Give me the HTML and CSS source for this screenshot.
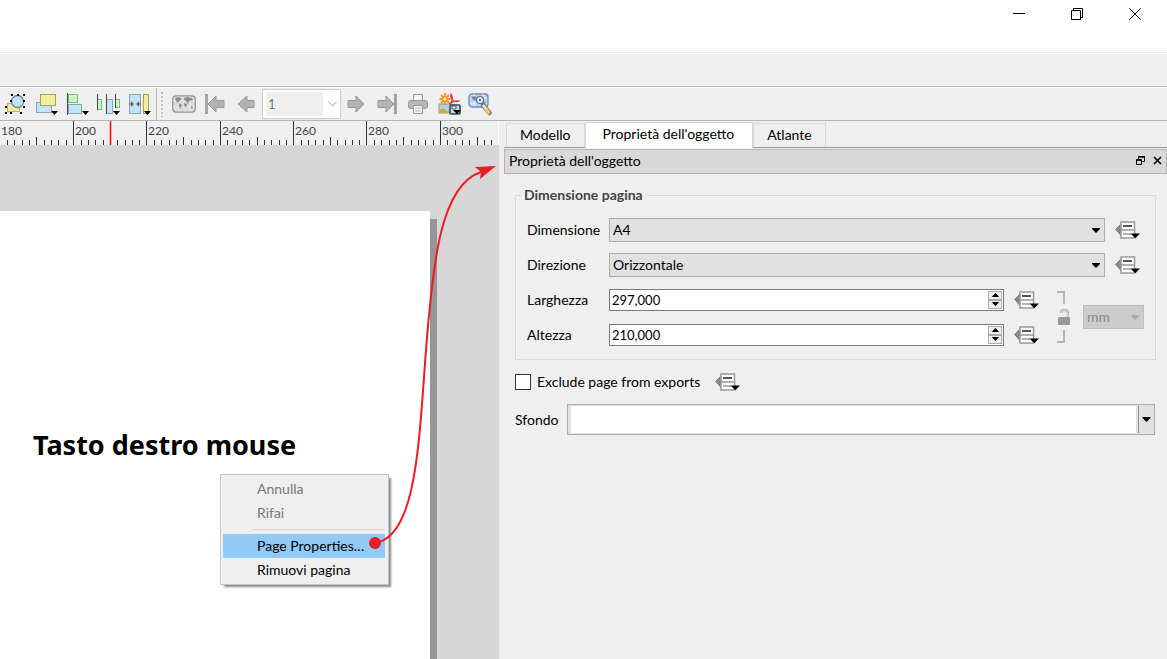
FILE: index.html
```html
<!DOCTYPE html>
<html lang="it">
<head>
<meta charset="utf-8">
<title>Layout</title>
<link rel="stylesheet" href="styles.css">
</head>
<body>
<svg class="defs" aria-hidden="true">
  <symbol id="override" viewBox="0 0 25 18">
    <path d="M6 3L.8 8.500l5.200 6z" fill="#8a8b8c" stroke="#747474"/>
    <rect x="6" y="1" width="13.500" height="16" fill="#fff" stroke="#999" stroke-width="1.500"/>
    <path d="M6 9h13" stroke="#999" stroke-width="1.500"/>
    <path d="M8 5h9" stroke="#555" stroke-width="2"/>
    <path d="M8 13h8" stroke="#888" stroke-width="1.300"/>
    <path d="M15.500 12.500h9.500l-4.700 4.800z" fill="#000"/>
  </symbol>
  <symbol id="down" viewBox="0 0 8 5"><path d="M0 0h8v1L4 5 0 1z" fill="currentColor"/></symbol>
</svg>

<header class="titlebar">
  <button class="win" aria-label="Riduci a icona"><svg viewBox="0 0 12 12"><path d="M0 5.500h12" stroke="#000"/></svg></button>
  <button class="win" aria-label="Ripristina"><svg viewBox="0 0 12 12"><path d="M.5 2.500h9v9h-9zM2.500 2V.5h9v9H10" fill="none" stroke="#000"/></svg></button>
  <button class="win" aria-label="Chiudi"><svg viewBox="0 0 12 12"><path d="M.3.3l11.400 11.400M11.700.3L.3 11.700" stroke="#000"/></svg></button>
</header>
<div class="menubar"></div>

<div class="toolbar" role="toolbar">
  <div class="tools tools-first">
    <button class="tool" aria-label="Raggruppa"><svg viewBox="0 0 24 24">
      <rect x="4.500" y="11.500" width="12" height="8" fill="#f2e99b" stroke="#c6b458"/><circle cx="14.500" cy="9.500" r="6" fill="#c2e0f5" stroke="#6485a8" stroke-width="1.300"/>
      <path d="M2 20h2v2H2zM7 20h2v2H7zM17 20h2v2h-2zM2 14h2v2H2zM20 2h2v2h-2zM20 8h2v2h-2zM20 14h2v2h-2zM8 2h2v2H8zM14 2h2v2h-2zM7 8h2v2H7z"/></svg></button>
    <button class="tool" aria-label="Alza"><svg viewBox="0 0 24 24">
      <rect x="2.500" y="10.500" width="15" height="10" fill="#c5e3f7" stroke="#84a7c2"/><rect x="6.500" y="2.500" width="15" height="11" fill="#f2ef9f" stroke="#a99e58"/><path d="M17 19h7l-3.500 4z"/></svg></button>
    <button class="tool" aria-label="Allinea"><svg viewBox="0 0 24 24">
      <path d="M2.500 1v22" stroke="#444"/><rect x="3.500" y="2.500" width="9" height="8" fill="#c5f5c5" stroke="#7fba7f"/><rect x="3.500" y="12.500" width="13" height="9" fill="#c5e3f7" stroke="#84a7c2"/><path d="M17 19h7l-3.500 4z"/></svg></button>
    <button class="tool" aria-label="Distribuisci"><svg viewBox="0 0 24 24">
      <rect x="1.500" y="7.500" width="4" height="10" fill="#c5f5c5" stroke="#7fba7f"/><rect x="10.500" y="7.500" width="6" height="14" fill="#c5e3f7" stroke="#84a7c2"/><rect x="19.500" y="7.500" width="4" height="8" fill="#c5f5c5" stroke="#7fba7f"/><path d="M1.500 2v16M10.500 2v20M19.500 2v14" stroke="#444"/><path d="M17 19h7l-3.500 4z"/></svg></button>
    <button class="tool" aria-label="Ridimensiona"><svg viewBox="0 0 24 24">
      <rect x="2.500" y="2.500" width="11" height="19" fill="#c5e3f7" stroke="#84a7c2"/><rect x="16.500" y="2.500" width="5" height="19" fill="#f2ef9f" stroke="#a99e58"/><path d="M2 12h3M11 12h3" stroke="#555"/><path d="M4 9l3 3-3 3zM12 9l-3 3 3 3z" fill="#666"/><path d="M17 19h7l-3.500 4z"/></svg></button>
  </div>
  <span class="grip"></span>
  <div class="tools">
    <button class="tool" disabled aria-label="Anteprima atlante"><svg viewBox="0 0 24 24">
      <rect x=".8" y="3.800" width="22.400" height="16.400" rx="3.500" fill="#dcdcdc" stroke="#919191" stroke-width="1.200"/><path d="M1 9h22M1 15h22M7 4v16M13 4v16M18 4v16" stroke="#f2f2f2" stroke-width=".6"/><path d="M3 6l4-1 3 2-3 2-1 2-2-2zM7 11l3 2-2 4-1-3zM12 6l3-1 5 1 1 2-4 1-1 3-2-3-2-1zM12 11l3 1-1 4-2-3zM19 14l2 1-1 2-1-1z" fill="#8e8e8e"/></svg></button>
    <button class="tool" disabled aria-label="Prima geometria"><svg viewBox="0 0 24 24"><path d="M3.500 2v20" stroke="#a5a5a5" stroke-width="3"/><path d="M5 12l8-8v4.500h8v7h-8V20z" fill="#b2b2b2" stroke="#999"/></svg></button>
    <button class="tool" disabled aria-label="Precedente"><svg viewBox="0 0 24 24"><path d="M4 12l9-8v4.500h7v7h-7V20z" fill="#b2b2b2" stroke="#999"/></svg></button>
  </div>
  <div class="pagebox"><input type="text" value="1" disabled aria-label="Pagina atlante"><svg viewBox="0 0 10 6"><path d="M.5.500L5 5 9.500.500" fill="none" stroke="#999"/></svg></div>
  <div class="tools">
    <button class="tool" disabled aria-label="Successiva"><svg viewBox="0 0 24 24"><path d="M20 12l-8-8v4.500H4v7h8V20z" fill="#b2b2b2" stroke="#999"/></svg></button>
    <button class="tool" disabled aria-label="Ultima geometria"><svg viewBox="0 0 24 24"><path d="M20.500 2v20" stroke="#a5a5a5" stroke-width="3"/><path d="M19 12l-8-8v4.500H3v7h8V20z" fill="#b2b2b2" stroke="#999"/></svg></button>
    <button class="tool" disabled aria-label="Stampa atlante"><svg viewBox="0 0 24 24"><path d="M7.500 9V2.500h9V9" fill="#f3f3f3" stroke="#999"/><rect x="2.500" y="8.500" width="19" height="8" rx="2" fill="#b5b5b5" stroke="#999"/><path d="M7.500 13.500h9v8h-9z" fill="#fff" stroke="#999"/><path d="M9 16h6M9 19h6" stroke="#aaa"/></svg></button>
    <button class="tool" aria-label="Esporta atlante"><svg viewBox="0 0 24 24">
      <rect x="2" y="12" width="13" height="9" fill="#a8cff0" stroke="#b5984c"/><path d="M2.500 18q4-3 6 0t6-1v3.500h-12z" fill="#d1a845"/>
      <path d="M8 1v12M2.500 7h11M4 3l8 8M12 3l-8 8" stroke="#f7931e" stroke-width="2"/><circle cx="8" cy="7" r="1.500" fill="#fff"/>
      <path d="M12 12c4-2 4-7 2-10-1 5 3 9 8 7-4-1-7 1-10 3" fill="none" stroke="#e33" stroke-width="1.200"/>
      <rect x="13" y="13" width="10" height="9" rx="1" fill="#c7dcec" stroke="#26445c" stroke-width="1.500"/><path d="M15 14h4v3h-4z" fill="#fff" stroke="#555"/><path d="M16 18h8l-4 4z"/></svg></button>
    <button class="tool" aria-label="Impostazioni atlante"><svg viewBox="0 0 24 24">
      <rect x="1" y="2" width="19" height="13" rx="3" fill="#bcd5ee" stroke="#6d8dac" stroke-width="1.300"/><path d="M2 6h17M2 11h17M6 2v12M15 2v12" stroke="#e6f1fc"/><path d="M3 5l4-1 2 2-3 3zM15 9l3 1-1 3z" fill="#6d8dac"/><circle cx="12" cy="8" r="3.500" fill="#e8f2fb" stroke="#536b82" stroke-width="1.200"/><circle cx="12" cy="8" r="1.200" fill="#536b82"/><path d="M15 13l6.500 8" stroke="#777" stroke-width="4.500" stroke-linecap="round"/><path d="M15 13l6 7.500" stroke="#e8e8e8" stroke-width="2.500"/><path d="M18 17l3.500 4.500" stroke="#f1d154" stroke-width="3"/></svg></button>
  </div>
</div>

<main class="workspace">
  <section class="canvas">
    <svg class="ruler" viewBox="0 0 499 24" width="499" height="24">
      <path class="tick" d="M7.500 19v6m7-6v6m8-6v6m7-6v6m7-9v9m8-6v6m7-6v6m7-6v6m8-6v6M73.500 0v25m8-6v6m7-6v6m7-6v6m8-6v6m7-9v9m7-6v6m8-6v6m7-6v6m7-6v6M146.500 0v25m8-6v6m7-6v6m8-6v6m7-6v6m7-9v9m8-6v6m7-6v6m7-6v6m8-6v6M220.500 0v25m7-6v6m8-6v6m7-6v6m7-6v6m8-9v9m7-6v6m7-6v6m8-6v6m7-6v6M293.500 0v25m8-6v6m7-6v6m7-6v6m8-6v6m7-9v9m7-6v6m8-6v6m7-6v6m7-6v6M366.500 0v25m8-6v6m7-6v6m8-6v6m7-6v6m7-9v9m8-6v6m7-6v6m7-6v6m8-6v6M440.500 0v25m7-6v6m8-6v6m7-6v6m7-6v6m8-9v9m7-6v6m7-6v6"/>
      <path d="M110.500 0v25" stroke="#f00" stroke-width="1.500"/>
      <path d="M498.500 0v25" stroke="#fff"/>
      <text x="1" y="14">180</text><text x="75" y="14">200</text><text x="148" y="14">220</text><text x="222" y="14">240</text><text x="295" y="14">260</text><text x="368" y="14">280</text><text x="442" y="14">300</text>
    </svg>
    <div class="view">
      <div class="sheet"><h1 class="note">Tasto destro mouse</h1></div>
      <div class="menu" role="menu">
        <button role="menuitem" disabled>Annulla</button>
        <button role="menuitem" disabled>Rifai</button>
        <hr>
        <button role="menuitem" class="current">Page Properties…</button>
        <button role="menuitem">Rimuovi pagina</button>
      </div>
    </div>
  </section>

  <aside class="panel">
    <nav class="tabs" role="tablist">
      <button role="tab">Modello</button><button role="tab" class="active" aria-selected="true">Proprietà dell'oggetto</button><button role="tab">Atlante</button>
    </nav>
    <div class="dock">
      <span>Proprietà dell'oggetto</span>
      <button aria-label="Sgancia"><svg viewBox="0 0 9 9"><path d="M2.500 3V1h6v4.500H6.500M.5 4h5v4.500h-5z" fill="none" stroke="#000"/><path d="M2 .800h7M0 4h6" stroke="#000" stroke-width="1.600"/></svg></button>
      <button aria-label="Chiudi pannello"><svg viewBox="0 0 9 9"><path d="M1 1l7 7M8 1L1 8" stroke="#000" stroke-width="1.700"/></svg></button>
    </div>
    <form class="form">
      <fieldset>
        <legend>Dimensione pagina</legend>
        <div class="row">
          <label for="size">Dimensione</label>
          <div class="combo"><select id="size"><option>A4</option></select><svg><use href="#down"/></svg></div>
          <button type="button" class="dd" aria-label="Sovrascrittura dimensione"><svg><use href="#override"/></svg></button>
        </div>
        <div class="row">
          <label for="dir">Direzione</label>
          <div class="combo"><select id="dir"><option>Orizzontale</option></select><svg><use href="#down"/></svg></div>
          <button type="button" class="dd" aria-label="Sovrascrittura direzione"><svg><use href="#override"/></svg></button>
        </div>
        <div class="pair">
          <div class="stack">
            <div class="row">
              <label for="w">Larghezza</label>
              <div class="spin"><input id="w" type="text" value="297,000"><div class="steps"><button type="button" aria-label="Aumenta"><svg class="up"><use href="#down"/></svg></button><button type="button" aria-label="Diminuisci"><svg><use href="#down"/></svg></button></div></div>
              <button type="button" class="dd" aria-label="Sovrascrittura larghezza"><svg><use href="#override"/></svg></button>
            </div>
            <div class="row">
              <label for="h">Altezza</label>
              <div class="spin"><input id="h" type="text" value="210,000"><div class="steps"><button type="button" aria-label="Aumenta"><svg class="up"><use href="#down"/></svg></button><button type="button" aria-label="Diminuisci"><svg><use href="#down"/></svg></button></div></div>
              <button type="button" class="dd" aria-label="Sovrascrittura altezza"><svg><use href="#override"/></svg></button>
            </div>
          </div>
          <button type="button" class="lock" disabled aria-label="Blocca proporzioni"><svg viewBox="0 0 14 52"><path d="M0 1h7v12M0 51h7V39" fill="none" stroke="#b5b5b5" stroke-width="2"/><path d="M4 22q0-3 3.500-3t3.500 4v5" fill="none" stroke="#b0b0b0" stroke-width="2.500"/><path d="M4 22q0-3 3.500-3t3.500 4v5" fill="none" stroke="#e2e2e2"/><rect x="1" y="26" width="12" height="8" rx="1.500" fill="#999"/></svg></button>
          <div class="combo unit"><select disabled aria-label="Unità"><option>mm</option></select><svg><use href="#down"/></svg></div>
        </div>
      </fieldset>
      <div class="exclude">
        <input type="checkbox" id="ex"><label for="ex">Exclude page from exports</label>
        <button type="button" class="dd" aria-label="Sovrascrittura esclusione"><svg><use href="#override"/></svg></button>
      </div>
      <div class="background">
        <label for="bg">Sfondo</label>
        <button type="button" id="bg" class="swatch"><span class="fill"></span><span class="drop"><svg><use href="#down"/></svg></span></button>
      </div>
    </form>
  </aside>

  <svg class="arrow" viewBox="0 0 140 400" width="140" height="400" aria-hidden="true">
    <path d="M15 392C57 386 59 289 66 199S81 34 121 21" fill="none" stroke="#ed1c24" stroke-width="2"/>
    <circle cx="15" cy="392" r="6" fill="#ed1c24"/>
    <path d="M136 15l-21 1 6 5-1 7z" fill="#ed1c24"/>
  </svg>
</main>
</body>
</html>
```
FILE: styles.css
```css
* { box-sizing: border-box; }
body {
  margin: 0;
  min-height: 100vh;
  display: flex;
  flex-direction: column;
  background: #efefef;
  color: #000;
  font: 14px/18px Lato, "Noto Sans", sans-serif;
}
button, input, select { font: inherit; color: inherit; margin: 0; }
button { padding: 0; border: 0; background: none; }
svg { display: block; }
.defs { position: absolute; width: 0; height: 0; }

.titlebar {
  display: flex;
  justify-content: flex-end;
  height: 53px;
  padding-right: 3px;
  background: #fff;
  border-bottom: 1px solid #efefef;
}
.win { width: 58px; height: 28px; display: grid; place-items: center; }
.win svg { width: 12px; height: 12px; }
.menubar { height: 33px; border-top: 1px solid #fff; }

.toolbar {
  display: flex;
  align-items: center;
  height: 35px;
  border-top: 1px solid #b5b5b5;
  border-bottom: 1px solid #b5b5b5;
  box-shadow: inset 0 1px #fff;
}
.tools { display: flex; gap: 7px; }
.tools-first { padding-left: 3px; }
.tool { width: 24px; height: 24px; }
.tool svg { width: 24px; height: 24px; }
.grip {
  align-self: stretch;
  width: 9px;
  margin: 1px 7px 0 5px;
  border-left: 1px solid #b5b5b5;
  background: repeating-linear-gradient(#c5c5c5 0 2px, #efefef 2px 4px) 4px 4px / 2px 25px no-repeat;
}
.pagebox {
  display: flex;
  align-items: center;
  width: 79px;
  height: 30px;
  margin: 0 3px 0 4px;
  padding: 3px;
  background: #fff;
  border: 1px solid #ccc;
}
.pagebox input { width: 57px; height: 24px; padding: 0 2px; border: 0; background: #efefef; color: #777; font-size: 13px; }
.pagebox svg { width: 10px; height: 6px; margin-left: 5px; }

.workspace { position: relative; flex: 1; display: flex; }
.canvas { flex: 0 0 499px; display: flex; flex-direction: column; background: #d7d7d7; overflow: hidden; }
.ruler { background: #efefef; font-size: 12px; }
.ruler text { fill: #444; }
.tick { stroke: #333; fill: none; }
.view { position: relative; flex: 1; display: flex; padding: 66px 62px 0 0; }
.sheet { flex: 1; margin-right: 7px; background: #fff; box-shadow: 7px 8px #969696; }
.note { margin: 216px 0 0 33px; font: bold 27px/36px "Noto Sans", sans-serif; white-space: nowrap; }

.menu {
  position: absolute;
  left: 220px;
  top: 329px;
  width: 169px;
  padding: 2px 3px 2px 2px;
  background: #efefef;
  border: 1px solid #c5c5c5;
  box-shadow: 3px 3px 2px -1px #888;
}
.menu button { display: block; width: 100%; height: 24px; padding-left: 34px; text-align: left; white-space: nowrap; }
.menu button:disabled { color: #777; }
.menu .current { background: #91c9f7; }
.menu hr { height: 1px; margin: 4px 0 4px 30px; border: 0; background: #d4d4d4; }

.panel { flex: 1; min-width: 0; padding-left: 5px; }
.tabs { display: flex; align-items: flex-end; height: 27px; padding-left: 2px; border-bottom: 1px solid #999; }
.tabs button { height: 24px; padding: 0 13px 2px; border: 1px solid #d9d9d9; border-bottom: 0; }
.tabs .active { height: 26px; padding: 0 18px 3px 17px; margin-bottom: -1px; background: #fff; }
.dock {
  display: flex;
  align-items: center;
  gap: 8px;
  height: 25px;
  margin-top: 1px;
  padding: 0 4px 2px 4px;
  background: #d9d9d9;
  border: 1px solid #b5b5b5;
}
.dock span { flex: 1; }
.dock svg { width: 9px; height: 9px; }

.form { padding: 12px 11px 0 11px; }
fieldset { min-width: 0; margin: 0; padding: 8px 10px 7px 11px; border: 1px solid #d9d9d9; }
legend { margin-left: -6px; padding: 0 3px; font-weight: bold; color: #444; }
.row { display: flex; align-items: center; height: 35px; }
.row label { flex: 0 0 82px; }
.combo { position: relative; flex: 1; height: 24px; }
.combo select { width: 100%; height: 24px; padding: 0 3px; appearance: none; border: 1px solid #adadad; border-radius: 0; background: #e1e1e1; }
.combo svg { position: absolute; right: 5px; top: 10px; width: 8px; height: 5px; pointer-events: none; }
.dd { width: 25px; height: 18px; margin-left: 10px; }
.dd svg { width: 25px; height: 18px; }
.row .dd { margin-right: 5px; }
.pair { display: flex; align-items: center; }
.stack { flex: 1; }
.spin { flex: 1; display: flex; height: 22px; padding: 1px; background: #fff; border: 1px solid #7a7a7a; }
.spin input { flex: 1; min-width: 0; padding: 0 1px; border: 0; background: none; font-size: 13px; }
.steps { display: flex; flex-direction: column; width: 14px; }
.steps button { flex: 1; display: grid; place-items: center; background: #efefef; border: 1px solid #adadad; }
.steps svg { width: 7px; height: 4px; }
.steps .up { transform: rotate(180deg); }
.lock { margin-left: 13px; }
.lock svg { width: 14px; height: 52px; }
.unit { flex: 0 0 61px; margin: 0 1px 0 12px; color: #aaa; }
.unit select { background: #ccc; border-color: #bfbfbf; color: #888; opacity: 1; }
.exclude { display: flex; align-items: center; height: 24px; margin-top: 10px; }
.exclude input { width: 16px; height: 16px; margin-right: 6px; appearance: none; background: #fff; border: 1px solid #333; }
.exclude .dd { margin-left: 15px; }
.background { display: flex; align-items: center; margin-top: 10px; padding-right: 1px; }
.background label { flex: 0 0 52px; }
.swatch { flex: 1; display: flex; height: 31px; padding: 1px; border: 1px solid #adadad; background: #e1e1e1; }
.fill { flex: 1; align-self: stretch; margin: 0 2px; background: #fff; }
.drop { align-self: stretch; display: grid; place-items: center; width: 15px; border-left: 1px solid #999; }
.drop svg { width: 9px; height: 5px; }

.arrow { position: absolute; left: 360px; top: 30px; pointer-events: none; }
```
